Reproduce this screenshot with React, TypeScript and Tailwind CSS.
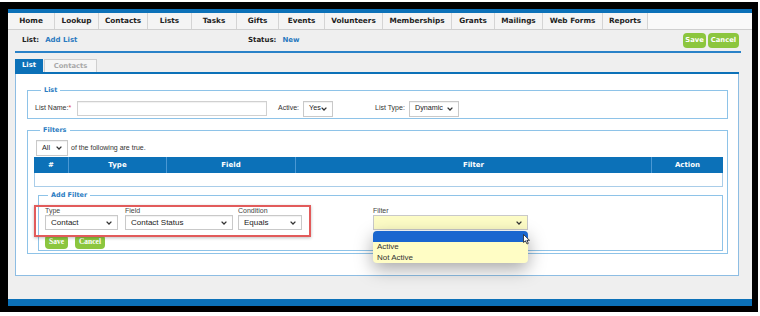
import React from "react";

const navTabs: { label: string; w: string }[] = [
  { label: "Home", w: "w-[47px]" },
  { label: "Lookup", w: "w-[44px]" },
  { label: "Contacts", w: "w-[49px]" },
  { label: "Lists", w: "w-[44px]" },
  { label: "Tasks", w: "w-[45px]" },
  { label: "Gifts", w: "w-[42px]" },
  { label: "Events", w: "w-[46px]" },
  { label: "Volunteers", w: "w-[58px]" },
  { label: "Memberships", w: "w-[69px]" },
  { label: "Grants", w: "w-[43px]" },
  { label: "Mailings", w: "w-[48px]" },
  { label: "Web Forms", w: "w-[60px]" },
  { label: "Reports", w: "w-[45px]" },
];

function Chev({ color = "#333" }: { color?: string }) {
  return (
    <svg width="6" height="4" viewBox="0 0 6 4" className="shrink-0">
      <path d="M0.6 0.6 L3 3 L5.4 0.6" fill="none" stroke={color} strokeWidth="1.3" />
    </svg>
  );
}

function Sel({ text, cls, textCls }: { text: string; cls: string; textCls: string }) {
  return (
    <div
      className={
        "flex items-center justify-between border border-[#c9c9c9] bg-white pl-[5px] pr-[5px] shadow-[inset_0_1px_1px_rgba(0,0,0,0.06)] " +
        cls
      }
    >
      <span className={textCls}>{text}</span>
      <Chev />
    </div>
  );
}

export default function App() {
  return (
    <div className="relative w-[760px] h-[316px] bg-white overflow-hidden font-['Liberation_Sans',sans-serif]">
      <div className="mt-[2px] w-[758px] h-[310px] bg-black pl-[8px] pt-[7px]">
        <div className="w-[744px] h-[297px] bg-[#efefef] flex flex-col">
          {/* top bar */}
          <div className="h-[4px] bg-[#0c71b8]" />
          {/* nav */}
          <div className="h-[17px] flex bg-[#f9f9f9] border-b border-[#cfcfcf]">
            {navTabs.map((t) => (
              <div
                key={t.label}
                className={
                  "h-full flex items-center justify-center bg-[#f4f4f4] border-r border-[#d4d4d4] text-[7.3px] font-bold text-[#222] font-['DejaVu_Sans',sans-serif] " +
                  t.w
                }
              >
                {t.label}
              </div>
            ))}
          </div>
          {/* list row */}
          <div className="h-[21px] flex items-center pl-[14px] pr-[13px] font-['DejaVu_Sans',sans-serif] text-[7px]">
            <div className="w-[226px] flex items-center gap-[6px]">
              <span className="font-bold text-[#222]">List:</span>
              <span className="font-bold text-[#2a7ac0]">Add List</span>
            </div>
            <div className="flex items-center gap-[6px]">
              <span className="font-bold text-[#222]">Status:</span>
              <span className="font-bold text-[#2a7ac0]">New</span>
            </div>
            <div className="ml-auto flex items-center gap-[2px]">
              <div className="h-[15px] w-[23px] rounded-[4px] bg-[#8cc63e] flex items-center justify-center text-white font-bold text-[6.8px]">
                Save
              </div>
              <div className="h-[15px] w-[31px] rounded-[4px] bg-[#8cc63e] flex items-center justify-center text-white font-bold text-[6.8px]">
                Cancel
              </div>
            </div>
          </div>
          <div className="ml-[7px] mr-[11px] h-[2px] bg-[#2a82c8]" />
          {/* tabs */}
          <div className="mt-[6px] ml-[7px] h-[13px] flex items-end font-['DejaVu_Sans',sans-serif] text-[6.8px] font-bold">
            <div className="w-[28px] h-[13px] bg-[#0c71b8] text-white flex items-center justify-center">List</div>
            <div className="ml-[1px] w-[53px] h-[13px] bg-[#f6f6f6] border border-b-0 border-[#cfcfcf] text-[#a9a9a9] flex items-center justify-center">
              Contacts
            </div>
          </div>
          <div className="ml-[7px] mr-[13px] h-[2px] bg-[#0c71b8]" />
          {/* panel */}
          <div className="ml-[7px] mr-[13px] h-[202px] bg-white border-x border-b border-[#8dbde3] pt-[10px] pl-[11px] pr-[10px]">
            {/* List fieldset */}
            <fieldset className="border border-[#8ec3e8] pt-[5px] pb-[2px] pl-[7px]">
              <legend className="ml-[6px] px-[3px] text-[6.5px] leading-[12px] font-bold text-[#2b7cc2] font-['DejaVu_Sans',sans-serif]">
                List
              </legend>
              <div className="h-[15px] flex items-center text-[7px] text-[#333]">
                <span className="w-[42px]">
                  List Name:<span className="text-[#e23c3c]">*</span>
                </span>
                <div className="w-[190px] h-[15px] border border-[#d0d0d0] bg-white shadow-[inset_0_1px_1px_rgba(0,0,0,0.06)]" />
                <span className="ml-[11px] w-[25px]">Active:</span>
                <Sel text="Yes" cls="w-[30px] h-[16px]" textCls="text-[7.2px] text-[#222]" />
                <span className="ml-[42px] w-[34px]">List Type:</span>
                <Sel text="Dynamic" cls="w-[50px] h-[16px]" textCls="text-[7.2px] text-[#222]" />
              </div>
            </fieldset>
            {/* Filters fieldset */}
            <fieldset className="mt-[5px] border border-[#8ec3e8] pt-[4px] pb-[2px] pl-[6px] pr-[4px]">
              <legend className="ml-[6px] px-[3px] text-[6.5px] leading-[12px] font-bold text-[#2b7cc2] font-['DejaVu_Sans',sans-serif]">
                Filters
              </legend>
              <div className="flex items-center gap-[3px] ml-[2px]">
                <Sel text="All" cls="w-[32px] h-[16px]" textCls="text-[7.2px] text-[#222]" />
                <span className="text-[7px] text-[#333]">of the following are true.</span>
              </div>
              <div className="mt-[1px] w-[689px]">
                <div className="h-[16px] grid grid-cols-[35px_98px_129px_356px_1fr] bg-[#0c71b8] text-white font-bold text-[7px] font-['DejaVu_Sans',sans-serif]">
                  <div className="flex items-center justify-center border-r border-[#4a98d4]">#</div>
                  <div className="flex items-center justify-center border-r border-[#4a98d4]">Type</div>
                  <div className="flex items-center justify-center border-r border-[#4a98d4]">Field</div>
                  <div className="flex items-center justify-center border-r border-[#4a98d4]">Filter</div>
                  <div className="flex items-center justify-center">Action</div>
                </div>
                <div className="h-[14px] border border-t-0 border-[#a9cde9] bg-white" />
              </div>
              {/* Add Filter */}
              <fieldset className="mt-[2px] ml-[4px] w-[685px] border border-[#8ec3e8] pt-[6px] pb-[1px] pl-[6px]">
                <legend className="ml-[3px] px-[3px] text-[6.5px] leading-[12px] font-bold text-[#2b7cc2] font-['DejaVu_Sans',sans-serif]">
                  Add Filter
                </legend>
                <div className="flex items-start text-[7px] text-[#444]">
                  <div className="flex flex-col w-[73px]">
                    <span className="h-[8px] leading-[8px]">Type</span>
                    <Sel text="Contact" cls="w-[73px] h-[15px]" textCls="text-[8px] text-[#222]" />
                  </div>
                  <div className="ml-[7px] flex flex-col w-[108px]">
                    <span className="h-[8px] leading-[8px]">Field</span>
                    <Sel text="Contact Status" cls="w-[108px] h-[15px]" textCls="text-[8px] text-[#222]" />
                  </div>
                  <div className="ml-[5px] flex flex-col w-[64px]">
                    <span className="h-[8px] leading-[8px]">Condition</span>
                    <Sel text="Equals" cls="w-[64px] h-[15px]" textCls="text-[8px] text-[#222]" />
                  </div>
                  <div className="ml-[71px] flex flex-col w-[155px]">
                    <span className="h-[8px] leading-[8px]">Filter</span>
                    <div className="w-[155px] h-[15px] border border-[#c9c9c9] bg-[#fdfcc6] flex items-center justify-end pr-[5px]">
                      <Chev />
                    </div>
                  </div>
                </div>
                <div className="mt-[5px] flex items-center gap-[7px] font-['Liberation_Serif',serif] font-bold text-[7.5px] text-white">
                  <div className="w-[23px] h-[14px] rounded-[4px] bg-[#8cc63e] flex items-center justify-center">Save</div>
                  <div className="w-[30px] h-[14px] rounded-[4px] bg-[#8cc63e] flex items-center justify-center">Cancel</div>
                </div>
              </fieldset>
            </fieldset>
          </div>
          <div className="flex-1" />
          <div className="h-[7px] bg-[#0c71b8]" />
        </div>
      </div>

      {/* red annotation box */}
      <div className="absolute left-[34px] top-[205px] w-[277px] h-[32px] border-2 border-[#e25b5b] shadow-[0_1px_3px_rgba(0,0,0,0.25)]" />

      {/* dropdown list */}
      <div className="absolute left-[373px] top-[231px] w-[155px] h-[32px] bg-[#fffdc5] rounded-[4px] shadow-[0_6px_18px_rgba(0,0,0,0.35)] text-[8px] text-[#333]">
        <div className="h-[11px] bg-[#1a66cf] rounded-t-[4px]" />
        <div className="pl-[4px] h-[10px] leading-[10px]">Active</div>
        <div className="pl-[4px] h-[11px] leading-[11px]">Not Active</div>
      </div>

      {/* cursor */}
      <svg className="absolute left-[523px] top-[234px]" width="8" height="11" viewBox="0 0 8 11">
        <path d="M0.5 0.5 L0.5 8.5 L2.5 6.8 L4 10 L5.3 9.4 L3.9 6.3 L6.5 6.3 Z" fill="white" stroke="#222" strokeWidth="0.8" />
      </svg>
    </div>
  );
}
